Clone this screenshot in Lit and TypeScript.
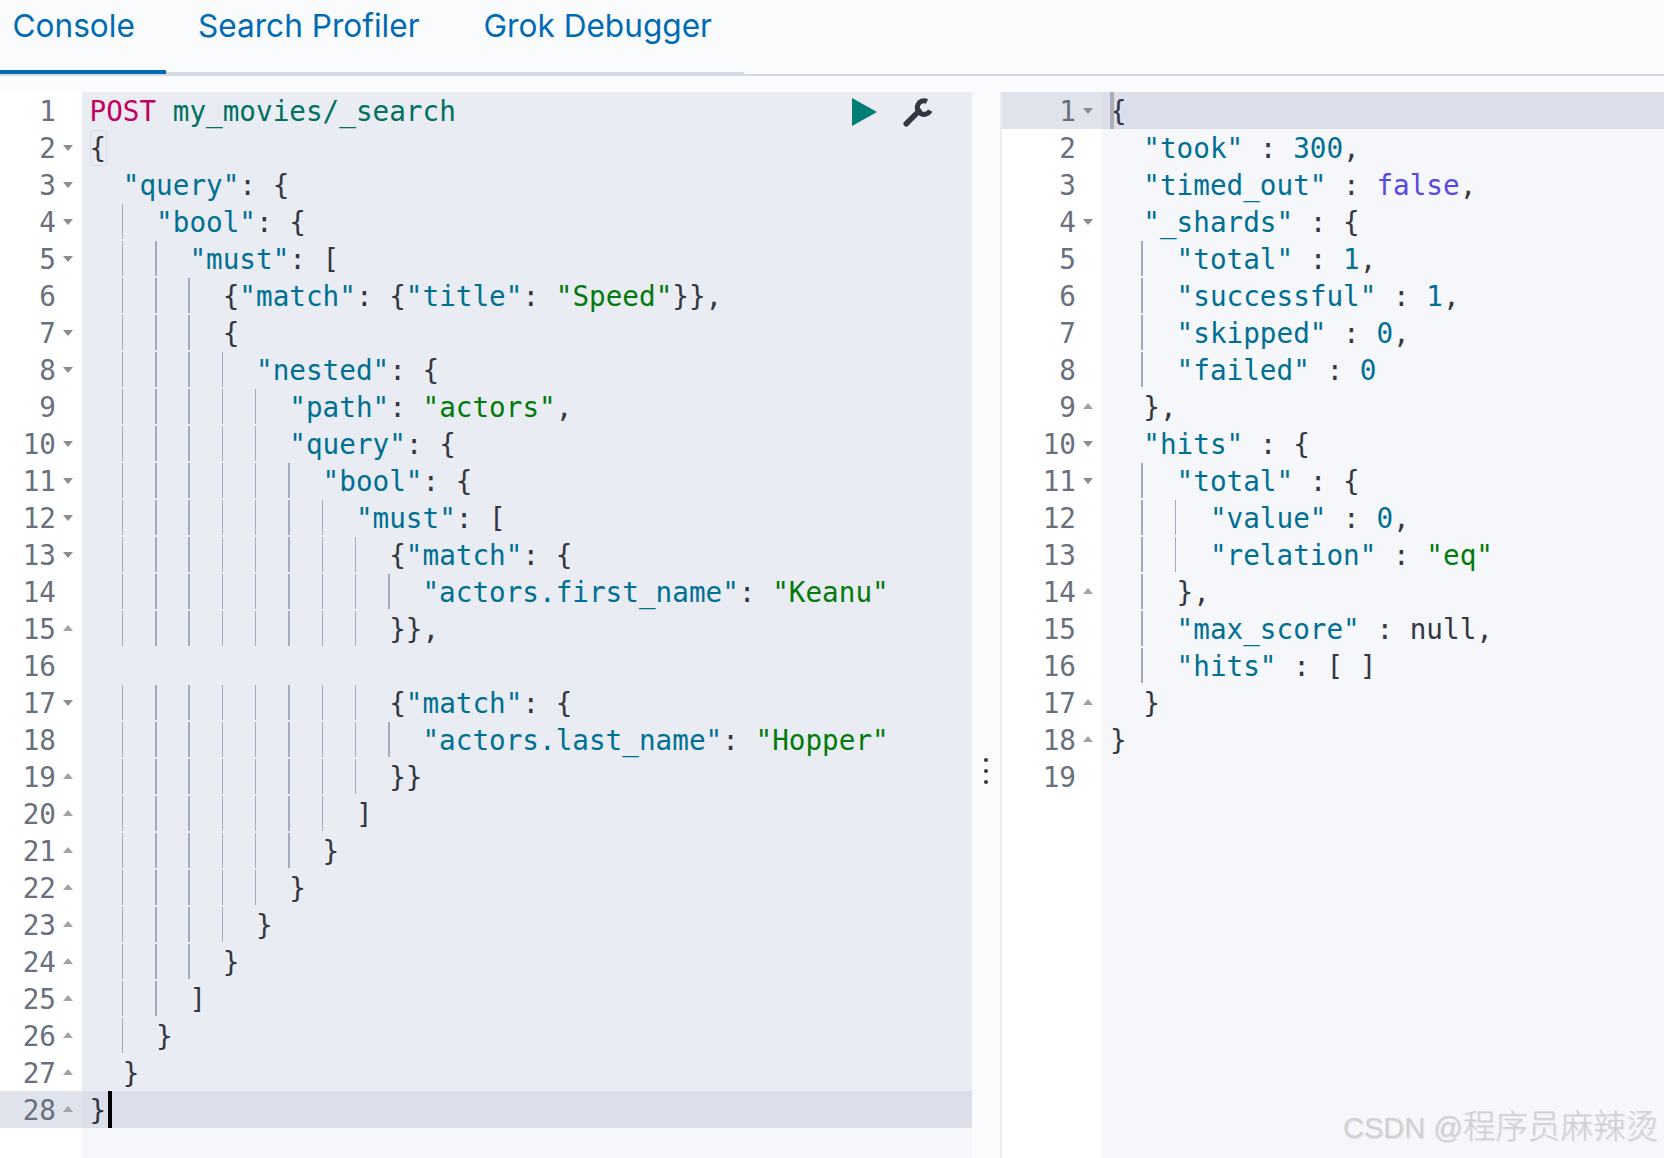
import { LitElement, html, css, nothing } from "lit";
import { customElement } from "lit/decorators.js";

type Line = { indent: number; text: string; fold?: "d" | "u"; noGuide?: boolean };

const left: Line[] = [
  { indent: 0, text: "POST my_movies/_search" },
  { indent: 0, text: "{", fold: "d" },
  { indent: 1, text: '"query": {', fold: "d" },
  { indent: 2, text: '"bool": {', fold: "d" },
  { indent: 3, text: '"must": [', fold: "d" },
  { indent: 4, text: '{"match": {"title": "Speed"}},' },
  { indent: 4, text: "{", fold: "d" },
  { indent: 5, text: '"nested": {', fold: "d" },
  { indent: 6, text: '"path": "actors",' },
  { indent: 6, text: '"query": {', fold: "d" },
  { indent: 7, text: '"bool": {', fold: "d" },
  { indent: 8, text: '"must": [', fold: "d" },
  { indent: 9, text: '{"match": {', fold: "d" },
  { indent: 10, text: '"actors.first_name": "Keanu"' },
  { indent: 9, text: "}},", fold: "u" },
  { indent: 0, text: "" },
  { indent: 9, text: '{"match": {', fold: "d" },
  { indent: 10, text: '"actors.last_name": "Hopper"' },
  { indent: 9, text: "}}", fold: "u" },
  { indent: 8, text: "]", fold: "u" },
  { indent: 7, text: "}", fold: "u" },
  { indent: 6, text: "}", fold: "u" },
  { indent: 5, text: "}", fold: "u" },
  { indent: 4, text: "}", fold: "u" },
  { indent: 3, text: "]", fold: "u" },
  { indent: 2, text: "}", fold: "u" },
  { indent: 1, text: "}", fold: "u" },
  { indent: 0, text: "}", fold: "u" },
];

const right: Line[] = [
  { indent: 0, text: "{", fold: "d" },
  { indent: 1, text: '"took" : 300,' },
  { indent: 1, text: '"timed_out" : false,' },
  { indent: 1, text: '"_shards" : {', fold: "d" },
  { indent: 2, text: '"total" : 1,' },
  { indent: 2, text: '"successful" : 1,' },
  { indent: 2, text: '"skipped" : 0,' },
  { indent: 2, text: '"failed" : 0' },
  { indent: 1, text: "},", fold: "u" },
  { indent: 1, text: '"hits" : {', fold: "d" },
  { indent: 2, text: '"total" : {', fold: "d" },
  { indent: 3, text: '"value" : 0,' },
  { indent: 3, text: '"relation" : "eq"' },
  { indent: 2, text: "},", fold: "u" },
  { indent: 2, text: '"max_score" : null,' },
  { indent: 2, text: '"hits" : [ ]' },
  { indent: 1, text: "}", fold: "u" },
  { indent: 0, text: "}", fold: "u" },
  { indent: 0, text: "" },
];

function tokens(text: string) {
  if (text.startsWith("POST ")) {
    return html`<span class="method">POST</span> <span class="url">${text.slice(5)}</span>`;
  }
  const re = /"[^"]*"(?=\s*:)|"[^"]*"|\b\d+\b|\bfalse\b|[^"\d]+?(?=\bfalse\b|"|\d|$)/g;
  const parts = text.match(re) ?? [];
  return parts.map((p) => {
    if (p.startsWith('"')) {
      const idx = text.indexOf(p);
      const after = text.slice(idx + p.length).trimStart();
      return html`<span class=${after.startsWith(":") ? "key" : "str"}>${p}</span>`;
    }
    if (/^\d+$/.test(p)) return html`<span class="num">${p}</span>`;
    if (p === "false") return html`<span class="bool">${p}</span>`;
    return p;
  });
}

@customElement("app-root")
export class AppRoot extends LitElement {
  static styles = css`
    :host {
      display: block;
      width: 1664px;
      height: 1158px;
      overflow: hidden;
      background: #fafbfd;
    }
    .bar {
      height: 74px;
      border-bottom: 2px solid #d3dae6;
      display: flex;
    }
    .tabs {
      display: flex;
      height: 72px;
      border-bottom: 2px solid #d3dae6;
      font: 400 31.6px "Inter", "Liberation Sans", sans-serif;
      color: #006bb4;
    }
    .tab {
      position: relative;
      padding: 7px 32px 0;
      line-height: 38px;
    }
    .tab.first {
      padding-left: 12.5px;
      width: 166px;
      box-sizing: border-box;
    }
    .tab.first::after {
      content: "";
      position: absolute;
      left: 0;
      right: 0;
      bottom: -2px;
      height: 4px;
      background: #006bb4;
    }
    .panes {
      display: flex;
      height: 1082px;
      margin-top: 16px;
      font-family: "DejaVu Sans Mono", monospace;
      font-size: 27.66px;
      line-height: 37px;
      color: #343741;
    }
    .pane {
      display: flex;
      flex-direction: column;
    }
    .pane.l {
      width: 972px;
      --gw: 82px;
      --nw: 56px;
      --cb: #e9edf3;
      --gl: -1px;
    }
    .pane.r {
      flex: 1;
      border-left: 2px solid #e9edf3;
      --gw: 100px;
      --nw: 74px;
      --cb: #f5f7fb;
      --gl: -2px;
    }
    .divider {
      width: 28px;
      flex: none;
      position: relative;
    }
    .dots {
      position: absolute;
      left: 12px;
      top: 666px;
      display: flex;
      flex-direction: column;
      gap: 7px;
    }
    .dots i {
      width: 4px;
      height: 4px;
      border-radius: 50%;
      background: #343741;
    }
    .row {
      display: flex;
      height: 37px;
      flex: none;
    }
    .gutter {
      width: var(--gw);
      flex: none;
      display: flex;
      background: #fff;
      color: #69707d;
    }
    .n {
      width: var(--nw);
      text-align: right;
      flex: none;
      padding-top: 1px;
    }
    .f {
      margin: 16px 0 0 7px;
      width: 0;
      height: 0;
      border-left: 5.5px solid transparent;
      border-right: 5.5px solid transparent;
    }
    .f.d {
      border-top: 6px solid #8c8c8c;
    }
    .f.u {
      border-bottom: 6px solid #a3a3a3;
      margin-top: 15px;
    }
    .code {
      flex: 1;
      min-width: 0;
      position: relative;
      display: flex;
      padding-left: 7.5px;
      background: var(--cb);
      white-space: pre;
    }
    .pane.r .code {
      padding-left: 8px;
    }
    .g {
      width: 2ch;
      flex: none;
      position: relative;
    }
    .g.on::before {
      content: "";
      position: absolute;
      left: var(--gl);
      top: 1px;
      height: 35px;
      width: 1.5px;
      background: #a2aabd;
    }
    .active .gutter {
      background: #dfe3ec;
    }
    .active .code {
      background: #dcdfe9;
    }
    .t {
      position: relative;
      padding-top: 1px;
    }
    .brk {
      position: absolute;
      left: 0;
      top: 1px;
      width: 15px;
      height: 34px;
      border: 1px solid #d3dae6;
      border-radius: 4px;
    }
    .caret {
      width: 4px;
      height: 37px;
      margin-left: 1.5px;
      background: #000;
    }
    .caret2 {
      position: absolute;
      left: 8px;
      top: 0;
      width: 4px;
      height: 37px;
      background: #a9aeb8;
    }
    .rest {
      flex: 1;
      display: flex;
    }
    .rest .gutter {
      width: var(--gw);
    }
    .rest .code {
      background: #f5f7fb;
    }
    .method {
      color: #c4005f;
    }
    .url {
      color: #00705f;
    }
    .key {
      color: #006f94;
    }
    .str {
      color: #017a0a;
    }
    .num {
      color: #006f94;
    }
    .bool {
      color: #5a48e0;
    }
    .tools {
      position: absolute;
      left: 852px;
      top: 98px;
      display: flex;
      gap: 25px;
      align-items: flex-start;
    }
    .tools svg {
      display: block;
    }
    .mark {
      position: absolute;
      left: 1343px;
      top: 1104px;
      font: 400 29px/40px "Liberation Sans", "Noto Sans CJK SC", sans-serif;
      color: #cfd1d4;
      text-shadow: 1px 1px 1px #e2e3e6;
      white-space: nowrap;
    }
    .mark span {
      font-size: 32.6px;
      font-family: "Noto Sans CJK SC", sans-serif;
      font-weight: 300;
    }
    .wrap {
      position: relative;
    }
  `;

  private renderLine(l: Line, i: number, side: "l" | "r") {
    const active = side === "l" ? i === 27 : i === 0;
    const guides = [];
    for (let u = 0; u < l.indent; u++) {
      guides.push(html`<span class="g ${u > 0 ? "on" : ""}"></span>`);
    }
    return html`<div class="row ${active ? "active" : ""}">
      <div class="gutter">
        <span class="n">${i + 1}</span>
        ${l.fold ? html`<span class="f ${l.fold}"></span>` : nothing}
      </div>
      <div class="code">
        ${guides}
        <span class="t"
          >${tokens(l.text)}${side === "l" && i === 1 ? html`<i class="brk"></i>` : nothing}</span
        >
        ${side === "l" && i === 27 ? html`<i class="caret"></i>` : nothing}
        ${side === "r" && i === 0 ? html`<i class="caret2"></i>` : nothing}
      </div>
    </div>`;
  }

  render() {
    return html`<div class="wrap">
      <div class="bar">
        <div class="tabs">
          <div class="tab first">Console</div>
          <div class="tab">Search Profiler</div>
          <div class="tab">Grok Debugger</div>
        </div>
      </div>
      <div class="panes">
        <div class="pane l">
          ${left.map((l, i) => this.renderLine(l, i, "l"))}
          <div class="rest"><div class="gutter"></div><div class="code"></div></div>
        </div>
        <div class="divider"><div class="dots"><i></i><i></i><i></i></div></div>
        <div class="pane r">
          ${right.map((l, i) => this.renderLine(l, i, "r"))}
          <div class="rest"><div class="gutter"></div><div class="code"></div></div>
        </div>
      </div>
      <div class="tools">
        <svg width="25" height="28" viewBox="0 0 25 28"><path d="M0 0L25 14L0 28Z" fill="#017d73" /></svg>
        <svg width="30" height="30" viewBox="0 0 30 30" fill="none" stroke="#343741">
          <path d="M25 3.4A6.8 6.8 0 1 0 28.2 12.6" stroke-width="5" />
          <path d="M4.2 25.8L17 13" stroke-width="5.5" stroke-linecap="round" />
        </svg>
      </div>
      <div class="mark">CSDN @<span>程序员麻辣烫</span></div>
    </div>`;
  }
}
